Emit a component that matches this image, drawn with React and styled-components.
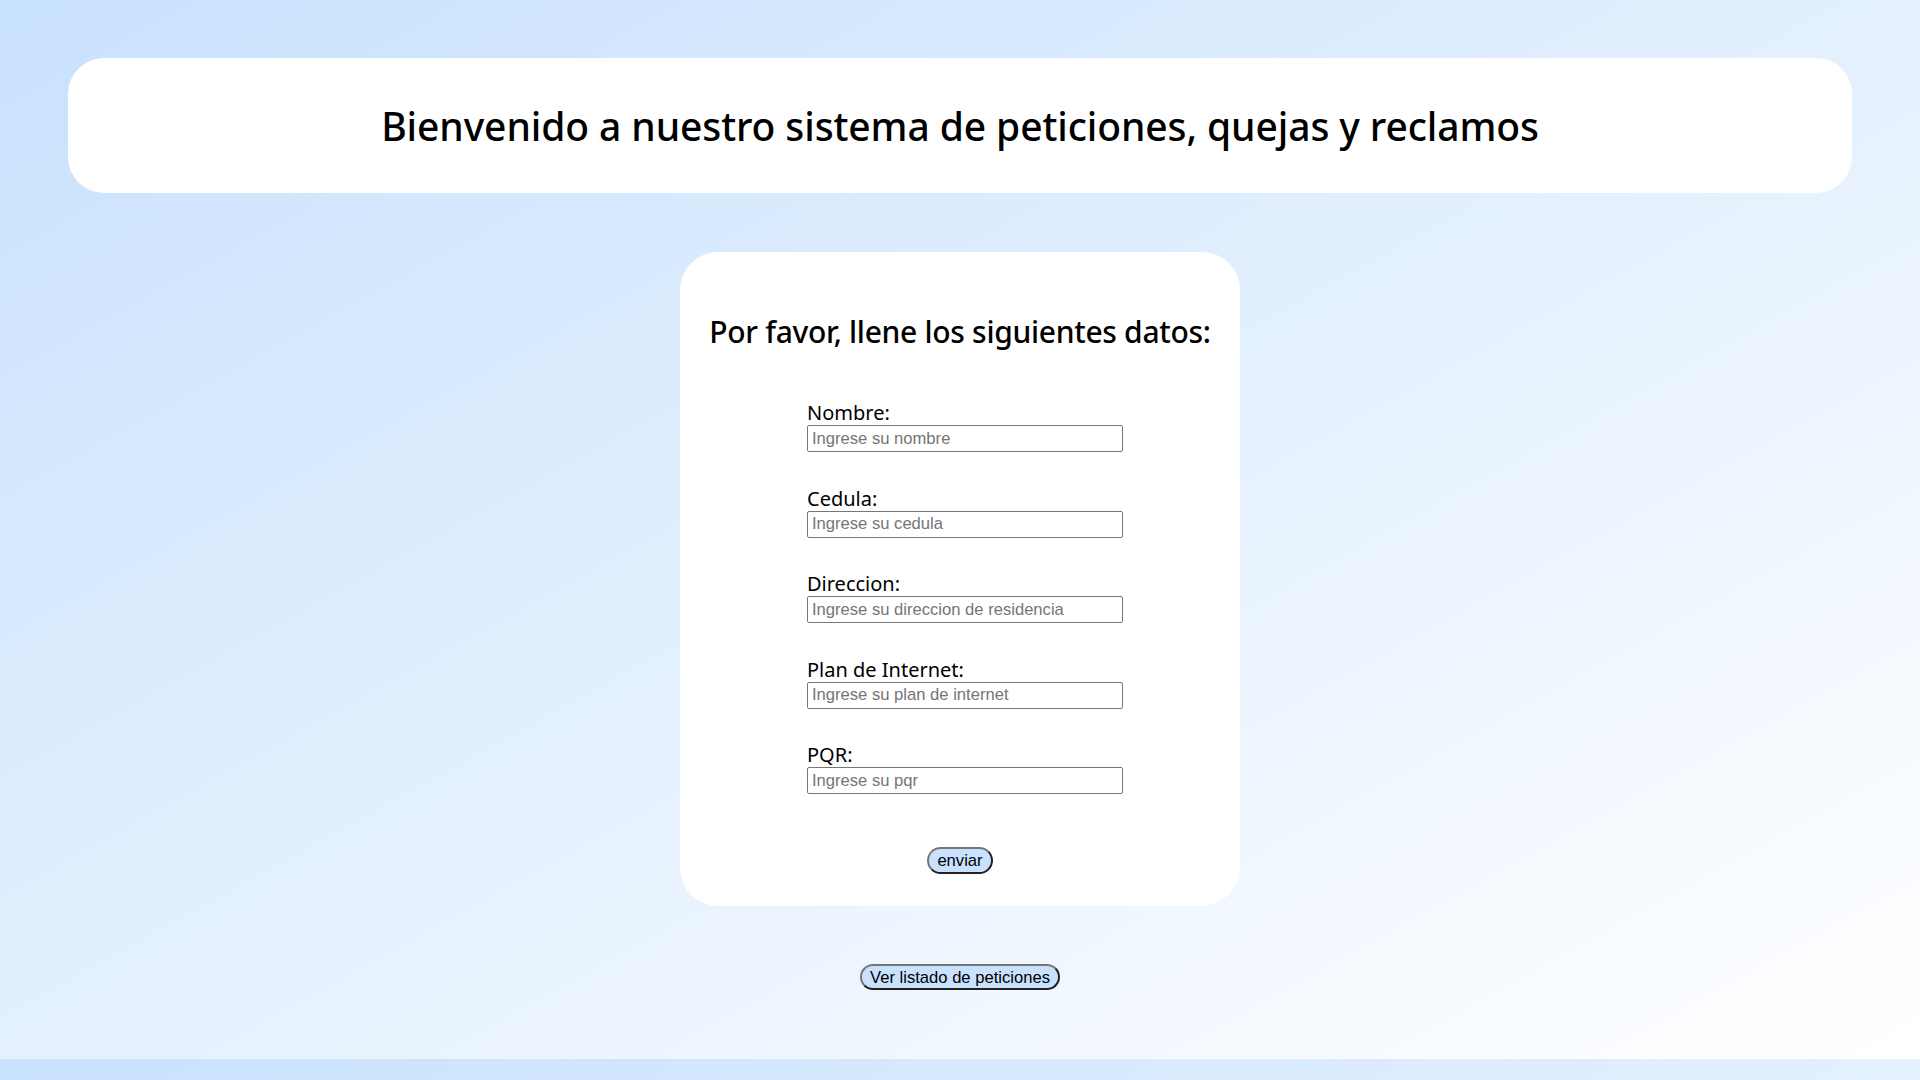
import React from "react";
import styled, { createGlobalStyle } from "styled-components";

const GlobalStyle = createGlobalStyle`
  html {
    background: linear-gradient(to bottom right, #c8e1fd, #ffffff);
    background-size: 100% 1059px;
    background-repeat: repeat;
  }
  body {
    margin: 0;
    font-family: "Noto Sans", "Liberation Sans", sans-serif;
    color: #000;
  }
`;

const Page = styled.main`
  display: flex;
  flex-direction: column;
  align-items: center;
  padding: 58px 68px 0;
`;

const Banner = styled.header`
  width: 100%;
  height: 135px;
  box-sizing: border-box;
  background: #ffffff;
  border-radius: 36px;
  display: flex;
  align-items: center;
  justify-content: center;
  h1 {
    margin: 0;
    font-size: 39px;
    font-weight: 500;
    letter-spacing: -0.1px;
  }
`;

const FormCard = styled.section`
  width: 560px;
  box-sizing: border-box;
  margin-top: 59px;
  padding: 62px 0 32px;
  background: #ffffff;
  border-radius: 38px;
  display: flex;
  flex-direction: column;
  align-items: center;
  h2 {
    margin: 0;
    font-size: 30px;
    line-height: 36px;
    font-weight: 500;
    letter-spacing: -0.3px;
  }
`;

const Form = styled.form`
  display: flex;
  flex-direction: column;
  align-items: center;
  width: 100%;
`;

const Fields = styled.div`
  display: flex;
  flex-direction: column;
  gap: 34.5px;
  width: 316px;
  margin: 51px 0 0 10px;
`;

const Field = styled.label`
  display: flex;
  flex-direction: column;
  font-size: 20px;
  line-height: 22px;
  padding-top: 1px;
  gap: 1px;
`;

const Input = styled.input`
  box-sizing: border-box;
  width: 316px;
  height: 27px;
  margin: 0;
  padding: 1px 4px;
  border: 1px solid #767676;
  border-radius: 2px;
  font-family: "Liberation Sans", Arial, sans-serif;
  font-size: 16.6px;
  background: #fff;
  &::placeholder {
    color: #757575;
  }
`;

const PillButton = styled.button`
  font-family: "Liberation Sans", Arial, sans-serif;
  font-size: 16.6px;
  color: #000;
  background: #c8e1fd;
  border: 2px outset #767676;
  border-radius: 14px;
  padding: 2px 8px;
  height: ${(p) => (p.$wide ? "26px" : "27px")};
  margin-top: ${(p) => (p.$wide ? "58px" : "53px")};
  cursor: pointer;
`;

const fields = [
  { label: "Nombre:", placeholder: "Ingrese su nombre" },
  { label: "Cedula:", placeholder: "Ingrese su cedula" },
  { label: "Direccion:", placeholder: "Ingrese su direccion de residencia" },
  { label: "Plan de Internet:", placeholder: "Ingrese su plan de internet" },
  { label: "PQR:", placeholder: "Ingrese su pqr" },
];

export default function App() {
  return (
    <>
      <GlobalStyle />
      <Page>
        <Banner>
          <h1>Bienvenido a nuestro sistema de peticiones, quejas y reclamos</h1>
        </Banner>
        <FormCard>
          <h2>Por favor, llene los siguientes datos:</h2>
          <Form onSubmit={(e) => e.preventDefault()}>
            <Fields>
              {fields.map((f) => (
                <Field key={f.label}>
                  {f.label}
                  <Input type="text" placeholder={f.placeholder} />
                </Field>
              ))}
            </Fields>
            <PillButton type="submit">enviar</PillButton>
          </Form>
        </FormCard>
        <PillButton $wide type="button">Ver listado de peticiones</PillButton>
      </Page>
    </>
  );
}
